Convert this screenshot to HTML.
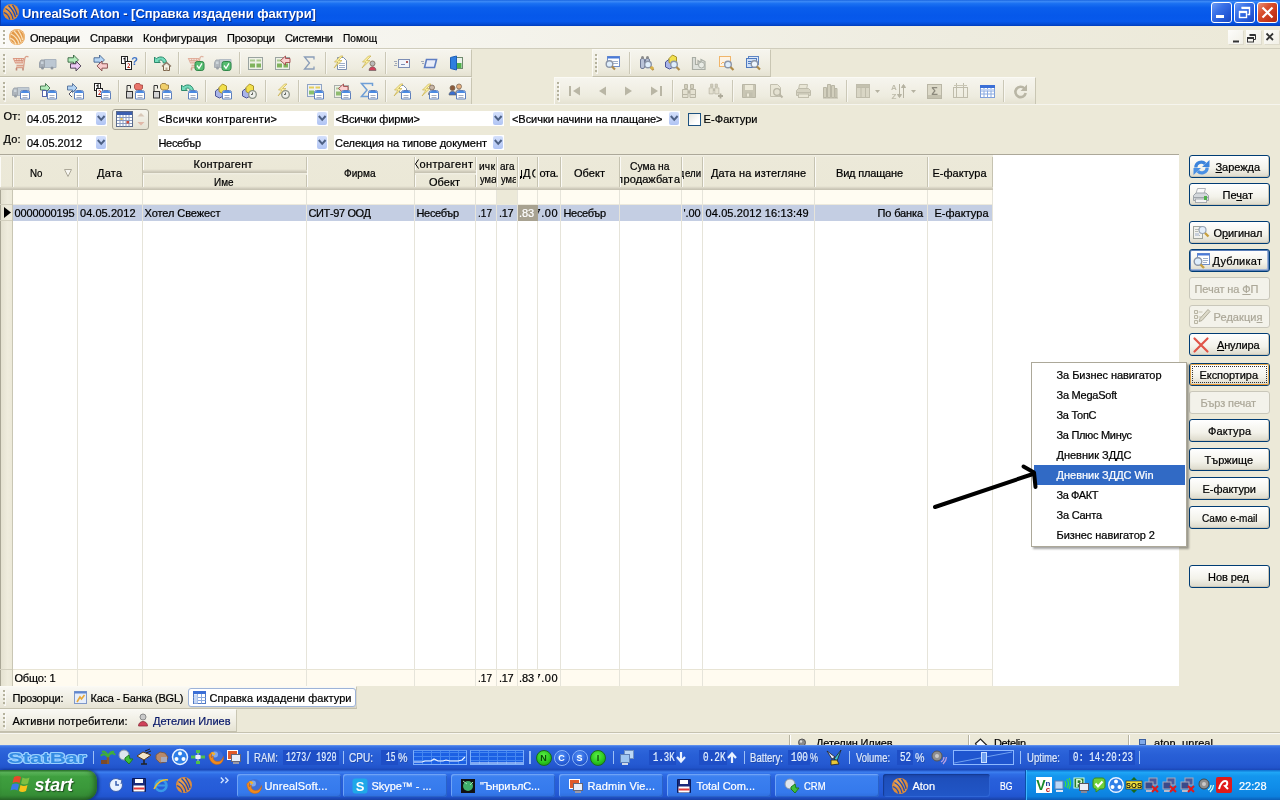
<!DOCTYPE html>
<html><head><meta charset="utf-8"><title>UnrealSoft Aton</title><style>
html,body{margin:0;padding:0;}
body{width:1280px;height:800px;overflow:hidden;background:#ece9d8;font-family:"Liberation Sans",sans-serif;font-size:11px;color:#000;position:relative;}
div,span{position:absolute;box-sizing:border-box;white-space:nowrap;}
svg{position:absolute;overflow:visible;}
.t{line-height:13px;height:13px;-webkit-text-stroke:.22px currentColor;}
.title{left:0;top:0;width:1280px;height:26px;background:linear-gradient(#1a66e0 0%,#3a88f6 6%,#1a70f2 14%,#0a5eec 30%,#0658ea 60%,#0759ec 82%,#044cd4 93%,#003cbc 100%);box-shadow:inset 1px 0 0 #0a3cb0;}
.title .cap{left:22px;top:6px;color:#fff;font-weight:bold;font-size:13px;line-height:16px;height:16px;letter-spacing:-0.05px;text-shadow:1px 1px 0 #0a2f8c;}
.menubar{left:0;top:26px;width:1280px;height:23px;background:linear-gradient(90deg,#faf9f6 0%,#f5f4ed 35%,#eeecdf 75%,#ece9d8 100%);border-bottom:1px solid #d0cdbc;}
.mi{top:6px;}
.tb{background:linear-gradient(#f6f5ee,#eeecdf 70%,#e5e2d2);border-top:1px solid #fbfaf5;border-bottom:1px solid #c3c0ad;border-right:1px solid #c9c6b3;}
.grip{width:2px;background-image:repeating-linear-gradient(#b5b29d 0,#b5b29d 2px,transparent 2px,transparent 4px);box-shadow:1px 1px 0 rgba(255,255,255,.7);}
.sep{width:1px;background:#cbc8b7;border-right:0;box-shadow:1px 0 0 #f8f7f1;}
.combo{background:#fff;height:15px;}
.combo .t{left:3px;top:2px;font-size:11px;}
.dd{width:10px;height:13px;border-radius:2px;background:linear-gradient(#d4e0fb,#b0c4f4);}
.btn{left:1189px;width:81px;height:23px;border:1px solid #003c74;border-radius:3px;background:linear-gradient(#ffffff,#f3f2ea 60%,#dcd9ca);text-align:center;font-size:11px;line-height:21px;box-shadow:inset -1px -1px 0 #cbc7b8;}
.btn.dis{border-color:#c9c7ba;color:#aca899;background:#f3f2ea;box-shadow:none;}
.btn u{text-decoration:underline;}
.gh{background:linear-gradient(#f3f1e6 0,#ece9d9 2px,#ebe8d7 calc(100% - 4px),#e2dece calc(100% - 3px),#d6d2c2 calc(100% - 2px),#cbc7b8 calc(100% - 1px),#c5c1b0 100%);overflow:hidden;}
.gh::after{content:"";position:absolute;right:0;top:2px;bottom:3px;width:1px;background:#c6c3b1;}
.gh::before{content:"";position:absolute;left:0;top:2px;bottom:3px;width:1px;background:#fbfaf6;}
.gh span{left:0;width:100%;text-align:center;line-height:13px;}
.cell{top:205px;height:16px;font-size:11px;line-height:16px;overflow:hidden;}
.foot{top:670px;height:16px;font-size:11px;line-height:16px;overflow:hidden;}
.vline{top:190px;width:1px;height:496px;background:#e6e4da;}
.mitem{left:1056px;font-size:11px;line-height:13px;}
.sb{color:#dfe9fb;font-size:12px;line-height:14px;top:751px;transform-origin:0 0;}
.sbd{color:#e9f2ff;font-family:"Liberation Mono",monospace;font-size:11px;line-height:14px;top:751px;}
.tsk{top:774px;height:23px;border-radius:3px;background:linear-gradient(#5c95f3 0,#3b80f0 12%,#3579ec 80%,#2f6edc 100%);box-shadow:inset 1px 1px 0 #6ea3f6,inset -1px -1px 0 #2a62c8;color:#fff;font-size:11px;}
.tsk .t{top:5px;font-size:11.5px;}
</style></head><body><div id="w" style="left:0;top:0;width:1280px;height:800px;will-change:transform;">

<div class="title"><span class="cap">UnrealSoft Aton - [Справка издадени фактури]</span></div>
<svg style="left:3px;top:4px" width="16" height="16" viewBox="0 0 16 16"><circle cx="8" cy="8" r="8" fill="#dc8c3c"/><circle cx="6" cy="5" r="4" fill="#eca85c" opacity=".6"/><path d="M2.500 4.500c4 2 6.500 5 7.500 10.500M5.500 1.500c3 3 6 7 7 11.500M9.500 .8c2 3 4 6 4.500 10M.8 8.500c3 1 5 3 6 7" fill="none" stroke="#1c4cb8" stroke-width="1.300"/></svg>
<div style="left:1211px;top:2px;width:21px;height:21px;border:1px solid #fff;border-radius:3px;background:linear-gradient(135deg,#6e9cf5 0%,#3a72e8 35%,#2459d8 70%,#1a48c0 100%);"></div>
<div style="left:1234px;top:2px;width:21px;height:21px;border:1px solid #fff;border-radius:3px;background:linear-gradient(135deg,#6e9cf5 0%,#3a72e8 35%,#2459d8 70%,#1a48c0 100%);"></div>
<div style="left:1257px;top:2px;width:21px;height:21px;border:1px solid #fff;border-radius:3px;background:linear-gradient(135deg,#e8927a 0%,#d9512f 35%,#c7371a 70%,#b02c12 100%);"></div>
<div style="left:1216px;top:15px;width:8px;height:3px;background:#fff;"></div>
<svg style="left:1238px;top:6px" width="14" height="14"><path d="M3.5 1.5h8v7h-2" fill="none" stroke="#fff" stroke-width="1.4"/><path d="M3.5 2.2h8" stroke="#fff" stroke-width="1.8"/><rect x="1.5" y="5.5" width="7" height="6" fill="none" stroke="#fff" stroke-width="1.4"/><path d="M1.5 6.2h7" stroke="#fff" stroke-width="1.8"/></svg>
<svg style="left:1261px;top:6px" width="14" height="14"><path d="M1.500 1.500l10 10M11.500 1.500l-10 10" stroke="#fff" stroke-width="2.2"/></svg>
<div class="menubar"></div>
<div class="grip" style="left:3px;top:30px;height:16px"></div>
<svg style="left:9px;top:29px" width="16" height="16" viewBox="0 0 16 16"><circle cx="8" cy="8" r="8" fill="#e39a4a"/><circle cx="8" cy="8" r="7.200" fill="none" stroke="#f6d0a0" stroke-width=".8"/><path d="M2 5c4 2 7 5 8 10M5 2c3 3 6 7 7 11M9 1c2 3 4 6 4.500 10M1 9c3 1 5 3 6 6.500" fill="none" stroke="#fbe3bd" stroke-width="1.300"/></svg>
<span class="t " style="left:30px;top:32px;font-size:11px;letter-spacing:-0.208px;">Операции</span>
<span class="t " style="left:90px;top:32px;font-size:11px;letter-spacing:0.011px;">Справки</span>
<span class="t " style="left:143px;top:32px;font-size:11px;letter-spacing:0.016px;">Конфигурация</span>
<span class="t " style="left:227px;top:32px;font-size:11px;letter-spacing:-0.231px;">Прозорци</span>
<span class="t " style="left:285px;top:32px;font-size:11px;letter-spacing:-0.343px;">Системни</span>
<span class="t " style="left:343px;top:32px;font-size:11px;transform:scaleX(0.9251);transform-origin:0 0;">Помощ</span>
<div style="left:1228px;top:30px;width:15px;height:14px;background:linear-gradient(135deg,#fdfdfb,#f1efe6);box-shadow:1px 1px 0 #dedbcc;"></div>
<div style="left:1246px;top:30px;width:15px;height:14px;background:linear-gradient(135deg,#fdfdfb,#f1efe6);box-shadow:1px 1px 0 #dedbcc;"></div>
<div style="left:1264px;top:30px;width:15px;height:14px;background:linear-gradient(135deg,#fdfdfb,#f1efe6);box-shadow:1px 1px 0 #dedbcc;"></div>
<svg style="left:1228px;top:30px" width="48" height="16"><path d="M5 11.5h6" stroke="#fff" stroke-width="2" transform="translate(1,1)"/><path d="M5 11.5h6" stroke="#333" stroke-width="2"/><g fill="none" stroke="#333" stroke-width="1"><path d="M21.5 4.5h6v5h-1.5M21.5 5.5h6" /><rect x="19.500" y="7.500" width="6" height="4.500"/><path d="M19.500 8.500h6"/></g><path d="M38.500 3.500l6.500 6.500M45 3.500l-6.500 6.500" stroke="#333" stroke-width="1.800"/></svg>
<div class="tb" style="left:0;top:49px;width:472px;height:28px;"></div>
<div class="tb" style="left:0;top:77px;width:472px;height:28px;"></div>
<div class="grip" style="left:3px;top:54px;height:19px"></div>
<div class="grip" style="left:3px;top:82px;height:19px"></div>
<svg style="left:12px;top:55px" width="16" height="16" viewBox="0 0 16 16"><path d="M16.500 2c-2.500-1.500-3.500 0-3.800 2l-1.200 8.500h-7.500M4.500 10.500h7" fill="none" stroke="#d9a08a" stroke-width="1.300"/><path d="M1.500 3.500h10l-1 4.500h-7z" fill="#f8e0d6" stroke="#dc9a84" stroke-width="1.100"/><path d="M3 5.500h8M4.500 3.500l.7 4.500M7 3.500v4.500M9.500 3.500l-.5 4.500" stroke="#d08a72" stroke-width=".8"/><path d="M4.500 13v2.500M11 13v2.500" stroke="#c08a78" stroke-width="1.600"/></svg>
<svg style="left:39px;top:55px" width="16" height="16" viewBox="0 0 16 16"><path d="M5.500 4.500h11.500v8h-11.500z" fill="#bcc7d2" stroke="#a9b3be"/><path d="M.5 12.500v-5l1.500-2.500h3.500v7.500z" fill="#a7afb8" stroke="#9aa2ab"/><path d="M2 6.500h2.500v2.500h-2.500z" fill="#c9d2da"/><circle cx="3.500" cy="13" r="1.500" fill="#8d959e"/><circle cx="13" cy="13" r="1.500" fill="#8d959e"/></svg>
<svg style="left:66px;top:55px" width="16" height="16" viewBox="0 0 16 16"><path transform="translate(2,0) scale(1.1)" d="M0 2.500h5v-2.500l4.500 4.500-4.500 4.500v-2.500h-5z" fill="#b4ecbc" stroke="#2a5a34" stroke-width=".75"/><path transform="translate(4.5,6) scale(1.1)" d="M0 2.500h5v-2.500l4.500 4.500-4.500 4.500v-2.500h-5z" fill="#eccaf4" stroke="#33283c" stroke-width=".75"/></svg>
<svg style="left:93px;top:55px" width="16" height="16" viewBox="0 0 16 16"><path transform="translate(1,0) scale(1.1)" d="M0 2.500h5v-2.500l4.500 4.500-4.500 4.500v-2.500h-5z" fill="#b4d4f4" stroke="#3a5a88" stroke-width=".75"/><path transform="translate(4,6) scale(1.1)" d="M9.500 2.500h-5v-2.500l-4.500 4.500 4.500 4.500v-2.500h5z" fill="#f8cccc" stroke="#7a3a3a" stroke-width=".75"/></svg>
<svg style="left:120px;top:55px" width="16" height="16" viewBox="0 0 16 16"><rect x="1.500" y="1.500" width="6" height="7" fill="#fff" stroke="#222"/><path d="M3.500 4l1.500-1v4.500" fill="none" stroke="#111" stroke-width="1.100"/><rect x="5.500" y="6.500" width="6" height="8" fill="#fff" stroke="#222"/><path d="M7.500 9q1.500-1.200 2 0t-2 3.500h2.500" fill="none" stroke="#c0392b" stroke-width="1"/><text x="14.500" y="9.500" font-size="11" font-family="Liberation Sans" font-weight="bold" text-anchor="middle" fill="#3f74c8">?</text></svg>
<div class="sep" style="left:145px;top:52px;height:22px"></div>
<svg style="left:153px;top:55px" width="16" height="16" viewBox="0 0 16 16"><path d="M1.500 7.500v-5.500l1.800 1.800c3.500-3.500 10-2 10.200 4.200h-3.200c-.2-3-3-3.800-4.800-2l1.800 1.500z" fill="#74dcbc" stroke="#2c8a6c" stroke-width="1"/><path d="M10.500 11v4.500h6v-4.500" fill="#f8f2e6" stroke="#7a6248"/><path d="M9 11.500l4.500-4 4.500 4" fill="none" stroke="#8e7a68" stroke-width="1.500"/><rect x="12.500" y="12.500" width="2" height="3" fill="#b8a890"/></svg>
<div class="sep" style="left:178px;top:52px;height:22px"></div>
<svg style="left:187px;top:55px" width="16" height="16" viewBox="0 0 16 16"><g opacity=".75"><path d="M16.500 2c-2.500-1.500-3.500 0-3.800 2l-1.200 8.500h-7.500M4.500 10.500h7" fill="none" stroke="#d9a08a" stroke-width="1.300"/><path d="M1.500 3.500h10l-1 4.500h-7z" fill="#f8e0d6" stroke="#dc9a84" stroke-width="1.100"/><path d="M3 5.500h8M4.500 3.500l.7 4.500M7 3.500v4.500M9.500 3.500l-.5 4.500" stroke="#d08a72" stroke-width=".8"/><path d="M4.500 13v2.500M11 13v2.500" stroke="#c08a78" stroke-width="1.600"/></g><rect x="8" y="6.500" width="9" height="9" rx="2.200" fill="#55bd70" stroke="#2f8648"/><path d="M10 10.500l2 2.800 3-5" fill="none" stroke="#fff" stroke-width="1.300"/></svg>
<svg style="left:214px;top:55px" width="16" height="16" viewBox="0 0 16 16"><g opacity=".85"><path d="M5.500 4.500h11.500v8h-11.500z" fill="#bcc7d2" stroke="#a9b3be"/><path d="M.5 12.500v-5l1.500-2.500h3.500v7.500z" fill="#a7afb8" stroke="#9aa2ab"/><path d="M2 6.500h2.500v2.500h-2.500z" fill="#c9d2da"/><circle cx="3.500" cy="13" r="1.500" fill="#8d959e"/><circle cx="13" cy="13" r="1.500" fill="#8d959e"/></g><rect x="8" y="6.500" width="9" height="9" rx="2.200" fill="#55bd70" stroke="#2f8648"/><path d="M10 10.500l2 2.800 3-5" fill="none" stroke="#fff" stroke-width="1.300"/></svg>
<div class="sep" style="left:239px;top:52px;height:22px"></div>
<svg style="left:247px;top:55px" width="16" height="16" viewBox="0 0 16 16"><rect x="1.500" y="2.500" width="14" height="12" fill="#eef1e6" stroke="#9aa3a0"/><path d="M3 4.500h5v2h-5zM9.500 4.500h4.500v2h-4.500z" fill="#a9c98f"/><path d="M3 8.500h5v4h-5zM9.500 8.500h4.500v4h-4.500z" fill="#7fb35c"/></svg>
<svg style="left:274px;top:55px" width="16" height="16" viewBox="0 0 16 16"><rect x="1.500" y="2.500" width="14" height="12" fill="#eef1e6" stroke="#9aa3a0"/><path d="M3 4.500h5v2h-5zM9.500 4.500h4.500v2h-4.500z" fill="#a9c98f"/><path d="M3 8.500h5v4h-5zM9.500 8.500h4.500v4h-4.500z" fill="#7fb35c"/><path d="M16 3.500h-4.500v-2.500l-5 4.500 5 4.500v-2.500h4.500z" fill="#fbd0d0" stroke="#a04848" stroke-width=".9"/></svg>
<svg style="left:301px;top:55px" width="16" height="16" viewBox="0 0 16 16"><path d="M13 4.500v-2.500h-9.500l5 6-5 6h9.500v-2.500" fill="none" stroke="#8a9db8" stroke-width="1.300"/></svg>
<div class="sep" style="left:325px;top:52px;height:22px"></div>
<svg style="left:333px;top:55px" width="16" height="16" viewBox="0 0 16 16"><path d="M4.500 2.500h6l3 3v9h-9z" fill="#fff" stroke="#7b8fb0"/><path d="M6 8.500h6M6 10.500h6M6 12.500h6" stroke="#9fb0c9"/><g transform="translate(-2,0)"><path d="M9.500 1l-6 6h3.500l-4 6 8-7.500h-3.500l4.500-4.500z" fill="#fbf0a0" stroke="#c9b050" stroke-width=".7"/></g></svg>
<svg style="left:361px;top:55px" width="16" height="16" viewBox="0 0 16 16"><g transform="translate(-2,0)"><path d="M9.500 1l-6 6h3.500l-4 6 8-7.500h-3.500l4.500-4.500z" fill="#fbf0a0" stroke="#c9b050" stroke-width=".7"/></g><circle cx="11.5" cy="8.5" r="2.500" fill="#b9b9b9" stroke="#7c6a58" stroke-width=".8"/><path d="M8.0 15.5c0-5 7-5 7 0z" fill="#d0425a" stroke="#5a5a5a" stroke-width=".6"/></svg>
<div class="sep" style="left:385px;top:52px;height:22px"></div>
<svg style="left:394px;top:55px" width="16" height="16" viewBox="0 0 16 16"><rect x="4.500" y="4.500" width="11" height="8" fill="#f2f4fa" stroke="#7d8eb5"/><path d="M7 9.500h4" stroke="#7d8eb5"/><rect x="12" y="6" width="2" height="2" fill="#b05a5a"/><path d="M0 6.500h3M1 8.500h2M0 10.500h3" stroke="#a0a8b8"/></svg>
<svg style="left:421px;top:55px" width="16" height="16" viewBox="0 0 16 16"><path d="M5.500 4.500h10l-2 8h-10z" fill="#e9edf8" stroke="#5f7ec2" stroke-width="1.600"/><path d="M0 6.500h3M1 8.500h2" stroke="#a0a8b8"/></svg>
<svg style="left:448px;top:55px" width="16" height="16" viewBox="0 0 16 16"><rect x="7.500" y="2.500" width="7" height="11" fill="#eaf2ea" stroke="#6f8a6f"/><rect x="8.500" y="8" width="5" height="5" fill="#4fb04a"/><path d="M2.500 2.500l6-1.500v14l-6-1.500z" fill="#2f7fe0" stroke="#1f5fb5"/></svg>
<svg style="left:12px;top:83px" width="16" height="16" viewBox="0 0 16 16"><g opacity=".9"><path d="M5.500 4.500h11.500v8h-11.500z" fill="#bcc7d2" stroke="#a9b3be"/><path d="M.5 12.500v-5l1.500-2.500h3.500v7.500z" fill="#a7afb8" stroke="#9aa2ab"/><path d="M2 6.500h2.500v2.500h-2.500z" fill="#c9d2da"/><circle cx="3.500" cy="13" r="1.500" fill="#8d959e"/><circle cx="13" cy="13" r="1.500" fill="#8d959e"/></g><path d="M8.500 16v-6.500q0-2 2-2h5q2 0 2 2v6.500z" fill="#fff" stroke="#5f80bc"/><path d="M9 10v-.5q0-1.500 1.500-1.500h5q1.500 0 1.500 1.500v.5z" fill="#4a8ae2"/><path d="M10.500 12.500h5M10.500 14.500h5" stroke="#a4aec2" stroke-width="1"/></svg>
<svg style="left:39px;top:83px" width="16" height="16" viewBox="0 0 16 16"><path transform="translate(1.5,0.5) scale(1.0)" d="M0 2.500h5v-2.500l4.500 4.500-4.500 4.500v-2.500h-5z" fill="#b4ecbc" stroke="#2a5a34" stroke-width=".75"/><rect x="3.500" y="7.500" width="4" height="6" fill="#fff" stroke="#5566aa"/><path d="M8.500 16v-6.500q0-2 2-2h5q2 0 2 2v6.500z" fill="#fff" stroke="#5f80bc"/><path d="M9 10v-.5q0-1.500 1.500-1.500h5q1.500 0 1.500 1.500v.5z" fill="#4a8ae2"/><path d="M10.500 12.500h5M10.500 14.500h5" stroke="#a4aec2" stroke-width="1"/></svg>
<svg style="left:66px;top:83px" width="16" height="16" viewBox="0 0 16 16"><path transform="translate(1.5,0.5) scale(1.0)" d="M0 2.500h5v-2.500l4.500 4.500-4.500 4.500v-2.500h-5z" fill="#b4d4f4" stroke="#3a5a88" stroke-width=".75"/><path d="M6 8l-3 3 3 3" fill="#fff" stroke="#556"/><path d="M8.500 16v-6.500q0-2 2-2h5q2 0 2 2v6.500z" fill="#fff" stroke="#5f80bc"/><path d="M9 10v-.5q0-1.500 1.500-1.500h5q1.500 0 1.500 1.500v.5z" fill="#4a8ae2"/><path d="M10.500 12.500h5M10.500 14.500h5" stroke="#a4aec2" stroke-width="1"/></svg>
<svg style="left:93px;top:83px" width="16" height="16" viewBox="0 0 16 16"><rect x="1.500" y=".5" width="6" height="7" fill="#fff" stroke="#222"/><path d="M3.500 3l1.500-1v4" fill="none" stroke="#111" stroke-width="1.100"/><rect x="3.500" y="5.500" width="6" height="8" fill="#fff" stroke="#222"/><path d="M5.500 8q1.500-1.200 2 0t-2 3.500h2.500" fill="none" stroke="#c0392b" stroke-width="1"/><path d="M8.500 16v-6.500q0-2 2-2h5q2 0 2 2v6.500z" fill="#fff" stroke="#5f80bc"/><path d="M9 10v-.5q0-1.500 1.500-1.500h5q1.500 0 1.500 1.500v.5z" fill="#4a8ae2"/><path d="M10.500 12.500h5M10.500 14.500h5" stroke="#a4aec2" stroke-width="1"/></svg>
<div class="sep" style="left:118px;top:80px;height:22px"></div>
<svg style="left:126px;top:83px" width="16" height="16" viewBox="0 0 16 16"><g transform="translate(-1,0)"><rect x="1.500" y="8.500" width="6" height="6.500" fill="#d4d4d4" stroke="#333"/><path d="M2 8v-5.500h3.500v3" fill="none" stroke="#333"/></g><g transform="translate(1,-1)"><path d="M9 1.500h3.500l1 1.500h2v3.500l-2 1.500h-4.500l-1.500-2v-3z" fill="#e9746a" stroke="#9c3a34" stroke-width=".75"/></g><g transform="translate(1,0)"><path d="M8.500 16v-6.500q0-2 2-2h5q2 0 2 2v6.500z" fill="#fff" stroke="#5f80bc"/><path d="M9 10v-.5q0-1.500 1.500-1.500h5q1.500 0 1.500 1.500v.5z" fill="#4a8ae2"/><path d="M10.500 12.500h5M10.500 14.500h5" stroke="#a4aec2" stroke-width="1"/></g></svg>
<svg style="left:153px;top:83px" width="16" height="16" viewBox="0 0 16 16"><g transform="translate(-1,0)"><rect x="1.500" y="8.500" width="6" height="6.500" fill="#d4d4d4" stroke="#333"/><path d="M2 8v-5.500h3.500v3" fill="none" stroke="#333"/></g><g transform="translate(0,-1)"><path d="M9 1.500h3.500l1 1.500h2v3.500l-2 1.500h-4.500l-1.500-2v-3z" fill="#f0cf6a" stroke="#8a6a2a" stroke-width=".75"/></g><g transform="translate(1,0)"><path d="M8.500 16v-6.500q0-2 2-2h5q2 0 2 2v6.500z" fill="#fff" stroke="#5f80bc"/><path d="M9 10v-.5q0-1.500 1.500-1.500h5q1.500 0 1.500 1.500v.5z" fill="#4a8ae2"/><path d="M10.500 12.500h5M10.500 14.500h5" stroke="#a4aec2" stroke-width="1"/></g></svg>
<svg style="left:180px;top:83px" width="16" height="16" viewBox="0 0 16 16"><path d="M1.500 7.500v-5.500l1.800 1.800c3.500-3.500 10-2 10.200 4.200h-3.200c-.2-3-3-3.800-4.800-2l1.800 1.500z" fill="#74dcbc" stroke="#2c8a6c" stroke-width="1"/><path d="M8.500 16v-6.500q0-2 2-2h5q2 0 2 2v6.500z" fill="#fff" stroke="#5f80bc"/><path d="M9 10v-.5q0-1.500 1.500-1.500h5q1.500 0 1.500 1.500v.5z" fill="#4a8ae2"/><path d="M10.500 12.500h5M10.500 14.500h5" stroke="#a4aec2" stroke-width="1"/></svg>
<div class="sep" style="left:205px;top:80px;height:22px"></div>
<svg style="left:214px;top:83px" width="16" height="16" viewBox="0 0 16 16"><path d="M1.500 8l4-3 4 2v6l-4 2-4-2z" fill="#a9b4e8" stroke="#4b5596" stroke-width="1"/><path d="M5 4.500l3.500-3.500 4 2v5.500l-4 2-3.500-2z" fill="#f2e04c" stroke="#a8922a" stroke-width="1"/><path d="M8.500 16v-6.500q0-2 2-2h5q2 0 2 2v6.500z" fill="#fff" stroke="#5f80bc"/><path d="M9 10v-.5q0-1.500 1.500-1.500h5q1.500 0 1.500 1.500v.5z" fill="#4a8ae2"/><path d="M10.500 12.500h5M10.500 14.500h5" stroke="#a4aec2" stroke-width="1"/></svg>
<svg style="left:241px;top:83px" width="16" height="16" viewBox="0 0 16 16"><path d="M1.500 8l4-3 4 2v6l-4 2-4-2z" fill="#a9b4e8" stroke="#4b5596" stroke-width="1"/><path d="M5 4.500l3.500-3.500 4 2v5.500l-4 2-3.500-2z" fill="#f2e04c" stroke="#a8922a" stroke-width="1"/><circle cx="11.500" cy="11.500" r="3.800" fill="#eef0ea" stroke="#8b9186" stroke-width="1.300"/><path d="M11.500 9.500v2h-1.500" fill="none" stroke="#5a5f58" stroke-width="1"/></svg>
<div class="sep" style="left:265px;top:80px;height:22px"></div>
<svg style="left:274px;top:83px" width="16" height="16" viewBox="0 0 16 16"><g transform="translate(1,0)"><path d="M9.500 1l-6 6h3.500l-4 6 8-7.500h-3.500l4.500-4.500z" fill="#fbf0a0" stroke="#c9b050" stroke-width=".7"/></g><circle cx="11.500" cy="11.500" r="3.800" fill="#eef0ea" stroke="#8b9186" stroke-width="1.300"/><path d="M11.500 9.500v2h-1.500" fill="none" stroke="#5a5f58" stroke-width="1"/></svg>
<div class="sep" style="left:298px;top:80px;height:22px"></div>
<svg style="left:306px;top:83px" width="16" height="16" viewBox="0 0 16 16"><rect x="1.500" y="1.500" width="14" height="12" fill="#eef1f6" stroke="#8fa4c4"/><path d="M3 3.500h5v2h-5zM9.500 3.500h4.500v2h-4.500z" fill="#e5cf5b"/><path d="M3 7.500h5v4h-5z" fill="#8cc06a"/><path d="M8.500 16v-6.500q0-2 2-2h5q2 0 2 2v6.500z" fill="#fff" stroke="#5f80bc"/><path d="M9 10v-.5q0-1.500 1.500-1.500h5q1.500 0 1.500 1.500v.5z" fill="#4a8ae2"/><path d="M10.500 12.500h5M10.500 14.500h5" stroke="#a4aec2" stroke-width="1"/></svg>
<svg style="left:333px;top:83px" width="16" height="16" viewBox="0 0 16 16"><g opacity=".85"><rect x="1.500" y="2.500" width="14" height="12" fill="#eef1e6" stroke="#9aa3a0"/><path d="M3 4.500h5v2h-5zM9.500 4.500h4.500v2h-4.500z" fill="#a9c98f"/><path d="M3 8.500h5v4h-5zM9.500 8.500h4.500v4h-4.500z" fill="#7fb35c"/></g><g transform="translate(-1,0)"><path d="M16 3.500h-4.500v-2.500l-5 4.500 5 4.500v-2.500h4.500z" fill="#fbd0d0" stroke="#a04848" stroke-width=".9"/></g><path d="M8.500 16v-6.500q0-2 2-2h5q2 0 2 2v6.500z" fill="#fff" stroke="#5f80bc"/><path d="M9 10v-.5q0-1.500 1.500-1.500h5q1.500 0 1.500 1.500v.5z" fill="#4a8ae2"/><path d="M10.500 12.500h5M10.500 14.500h5" stroke="#a4aec2" stroke-width="1"/></svg>
<svg style="left:360px;top:83px" width="16" height="16" viewBox="0 0 16 16"><g transform="translate(-1,-1)"><path d="M13.500 4v-2.500h-11l5.500 6.500-5.500 6.500h11v-2.500" fill="none" stroke="#6f9fd6" stroke-width="1.500"/></g><path d="M8.500 16v-6.500q0-2 2-2h5q2 0 2 2v6.500z" fill="#fff" stroke="#5f80bc"/><path d="M9 10v-.5q0-1.500 1.500-1.500h5q1.500 0 1.500 1.500v.5z" fill="#4a8ae2"/><path d="M10.500 12.500h5M10.500 14.500h5" stroke="#a4aec2" stroke-width="1"/></svg>
<div class="sep" style="left:385px;top:80px;height:22px"></div>
<svg style="left:393px;top:83px" width="16" height="16" viewBox="0 0 16 16"><path d="M6.500 2.500h4l3 3v4h-7z" fill="#fff" stroke="#7b8fb0"/><g transform="translate(-2,0)"><path d="M9.500 1l-6 6h3.500l-4 6 8-7.500h-3.500l4.500-4.500z" fill="#fbf0a0" stroke="#c9b050" stroke-width=".7"/></g><path d="M8.500 16v-6.500q0-2 2-2h5q2 0 2 2v6.500z" fill="#fff" stroke="#5f80bc"/><path d="M9 10v-.5q0-1.500 1.500-1.500h5q1.500 0 1.500 1.500v.5z" fill="#4a8ae2"/><path d="M10.500 12.500h5M10.500 14.500h5" stroke="#a4aec2" stroke-width="1"/></svg>
<svg style="left:421px;top:83px" width="16" height="16" viewBox="0 0 16 16"><g transform="translate(-2,0)"><path d="M9.500 1l-6 6h3.500l-4 6 8-7.500h-3.500l4.500-4.500z" fill="#fbf0a0" stroke="#c9b050" stroke-width=".7"/></g><circle cx="11" cy="4.5" r="2.500" fill="#c9b8a8" stroke="#7c6a58" stroke-width=".8"/><path d="M7.5 11.5c0-5 7-5 7 0z" fill="#556" stroke="#5a5a5a" stroke-width=".6"/><path d="M8.500 16v-6.500q0-2 2-2h5q2 0 2 2v6.500z" fill="#fff" stroke="#5f80bc"/><path d="M9 10v-.5q0-1.500 1.500-1.500h5q1.500 0 1.500 1.500v.5z" fill="#4a8ae2"/><path d="M10.500 12.500h5M10.500 14.500h5" stroke="#a4aec2" stroke-width="1"/></svg>
<svg style="left:448px;top:83px" width="16" height="16" viewBox="0 0 16 16"><circle cx="4.5" cy="5" r="2.500" fill="#8a5a3a" stroke="#7c6a58" stroke-width=".8"/><path d="M1.0 12c0-5 7-5 7 0z" fill="#3a6fd0" stroke="#5a5a5a" stroke-width=".6"/><circle cx="11" cy="3.5" r="2.500" fill="#e6b080" stroke="#7c6a58" stroke-width=".8"/><path d="M7.5 10.5c0-5 7-5 7 0z" fill="#e0a060" stroke="#5a5a5a" stroke-width=".6"/><path d="M8.500 16v-6.500q0-2 2-2h5q2 0 2 2v6.500z" fill="#fff" stroke="#5f80bc"/><path d="M9 10v-.5q0-1.500 1.500-1.500h5q1.500 0 1.500 1.500v.5z" fill="#4a8ae2"/><path d="M10.500 12.500h5M10.500 14.500h5" stroke="#a4aec2" stroke-width="1"/></svg>
<div class="tb" style="left:592px;top:49px;width:179px;height:28px;border-left:1px solid #fbfaf5"></div>
<div class="grip" style="left:595px;top:54px;height:19px"></div>
<svg style="left:604px;top:55px" width="16" height="16" viewBox="0 0 16 16"><rect x="3.500" y="1.500" width="12" height="10" fill="#fff" stroke="#6f8ec9"/><path d="M3.500 2.500h12" stroke="#4a7ad8" stroke-width="2"/><path d="M9 6.500h5M9 8.500h5" stroke="#9fb0c9"/><circle cx="5.500" cy="9" r="3.300" fill="#dfeefc" stroke="#8c96a8" stroke-width="1.400"/><path d="M8 11.500l3 3" stroke="#b08c4a" stroke-width="2.200"/></svg>
<div class="sep" style="left:629px;top:52px;height:22px"></div>
<svg style="left:638px;top:55px" width="16" height="16" viewBox="0 0 16 16"><rect x="2.500" y="3.500" width="4" height="10" rx="1.500" fill="#b9c3d8" stroke="#6f7a96"/><rect x="7.500" y="3.500" width="4" height="8" rx="1.500" fill="#b9c3d8" stroke="#6f7a96"/><circle cx="4.500" cy="2.500" r="1.500" fill="#8a8a8a"/><circle cx="9.500" cy="2.500" r="1.500" fill="#8a8a8a"/><circle cx="10" cy="9.500" r="3.300" fill="#dfeefc" stroke="#8c96a8" stroke-width="1.400"/><path d="M12.500 12l3 3" stroke="#b08c4a" stroke-width="2.200"/><rect x="12.500" y="11.500" width="3" height="3" fill="#d9b24a" transform="rotate(45 14 13)"/></svg>
<svg style="left:664px;top:55px" width="16" height="16" viewBox="0 0 16 16"><g transform="translate(0,-1)"><path d="M1.500 8l4-3 4 2v6l-4 2-4-2z" fill="#a9b4e8" stroke="#4b5596" stroke-width="1"/><path d="M5 4.500l3.500-3.500 4 2v5.500l-4 2-3.500-2z" fill="#f2e04c" stroke="#a8922a" stroke-width="1"/></g><circle cx="10" cy="9.500" r="3.300" fill="#dfeefc" stroke="#8c96a8" stroke-width="1.400"/><path d="M12.500 12l3 3" stroke="#b08c4a" stroke-width="2.200"/></svg>
<svg style="left:691px;top:55px" width="16" height="16" viewBox="0 0 16 16"><path d="M1.500 14.500v-12h3v7h2.500v-4l3 2v-3l4 2v8z" fill="#dfe2dc" stroke="#a9ada4" stroke-width="1.200"/><circle cx="10.500" cy="10" r="3" fill="#e9ece6" stroke="#a9ada4"/></svg>
<svg style="left:718px;top:55px" width="16" height="16" viewBox="0 0 16 16"><rect x="1.500" y="1.500" width="11" height="10" fill="#fdf3e4" stroke="#f0b56a"/><path d="M3 9l2-2 2 2" fill="none" stroke="#f0b56a"/><circle cx="10" cy="9.500" r="3.300" fill="#dfeefc" stroke="#8c96a8" stroke-width="1.400"/><path d="M12.500 12l3 3" stroke="#b08c4a" stroke-width="2.200"/></svg>
<svg style="left:745px;top:55px" width="16" height="16" viewBox="0 0 16 16"><rect x="3.500" y="1.500" width="10" height="8" fill="#dfeaf8" stroke="#5f86c4"/><rect x="1.500" y="3.500" width="10" height="9" fill="#cfe0f6" stroke="#4f7abf"/><path d="M3 6.500h4M3 8.500h3" stroke="#4f7abf"/><circle cx="9.500" cy="9" r="3.300" fill="#eef6fd" stroke="#8c96a8" stroke-width="1.400"/><path d="M12 11.500l3 3" stroke="#b08c4a" stroke-width="2.200"/></svg>
<div class="tb" style="left:554px;top:77px;width:482px;height:28px;border-left:1px solid #fbfaf5"></div>
<div class="grip" style="left:557px;top:82px;height:19px"></div>
<svg style="left:567px;top:83px" width="16" height="16" viewBox="0 0 16 16"><path d="M3 3v10" stroke="#b9b6a5" stroke-width="2"/><path d="M13 3.500v9l-7-4.500z" fill="#b9b6a5"/></svg>
<svg style="left:594px;top:83px" width="16" height="16" viewBox="0 0 16 16"><path d="M12 3.500v9l-7-4.500z" fill="#b9b6a5"/></svg>
<svg style="left:621px;top:83px" width="16" height="16" viewBox="0 0 16 16"><path d="M4 3.500v9l7-4.500z" fill="#b9b6a5"/></svg>
<svg style="left:648px;top:83px" width="16" height="16" viewBox="0 0 16 16"><path d="M13 3v10" stroke="#b9b6a5" stroke-width="2"/><path d="M3 3.500v9l7-4.500z" fill="#b9b6a5"/></svg>
<div class="sep" style="left:672px;top:80px;height:22px"></div>
<svg style="left:681px;top:83px" width="16" height="16" viewBox="0 0 16 16"><path d="M3.500 1.500h3v4h-3zM9.500 1.500h3v4h-3z" fill="#d2cfbd" stroke="#b9b6a5"/><path d="M1.500 6.500h5.500v8h-5.500zM9 6.500h5.500v8h-5.500z" fill="#e4e1d1" stroke="#b9b6a5"/><path d="M7 7.500h2v3h-2z" fill="#b9b6a5"/><path d="M2 11.500h4.500M9.500 11.500h4.500" stroke="#b9b6a5"/></svg>
<svg style="left:708px;top:83px" width="16" height="16" viewBox="0 0 16 16"><g transform="scale(.75)"><path d="M3.500 1.500h3v4h-3zM9.500 1.500h3v4h-3z" fill="#d2cfbd" stroke="#b9b6a5"/><path d="M1.500 6.500h5.500v8h-5.500zM9 6.500h5.500v8h-5.500z" fill="#e4e1d1" stroke="#b9b6a5"/><path d="M7 7.500h2v3h-2z" fill="#b9b6a5"/></g><path d="M10 13h5M12.500 10.500v5" stroke="#aeab9a" stroke-width="1.800"/></svg>
<div class="sep" style="left:732px;top:80px;height:22px"></div>
<svg style="left:741px;top:83px" width="16" height="16" viewBox="0 0 16 16"><path d="M1.500 1.500h13v13h-13z" fill="#c9c6b4" stroke="#b9b6a5"/><rect x="4" y="2" width="8" height="5" fill="#ece9d8"/><rect x="4.500" y="9.500" width="7" height="5" fill="#c2bfae"/><rect x="6" y="10.500" width="2" height="3" fill="#ece9d8"/></svg>
<svg style="left:768px;top:83px" width="16" height="16" viewBox="0 0 16 16"><path d="M2.500 1.500h7l3 3v9h-10z" fill="#e9e6d6" stroke="#c2bfae"/><circle cx="9" cy="9" r="3.300" fill="#e4e1d1" stroke="#b9b6a5" stroke-width="1.300"/><path d="M11.500 11.500l3 3" stroke="#b9b6a5" stroke-width="2"/></svg>
<svg style="left:795px;top:83px" width="16" height="16" viewBox="0 0 16 16"><path d="M4.500 1.500h8l-1 5h-8z" fill="#e9e6d6" stroke="#c2bfae"/><path d="M1.500 7.500l2-2h10l2 2v5h-14z" fill="#d6d3c2" stroke="#bfbcab"/><path d="M1.500 9.500h14" stroke="#bfbcab"/><rect x="3.500" y="11" width="10" height="3.500" fill="#e9e6d6" stroke="#c2bfae"/></svg>
<svg style="left:822px;top:83px" width="16" height="16" viewBox="0 0 16 16"><path d="M1.500 4.500h3v10h-3zM5.500 1.500h3v13h-3zM9.500 2.500h3v12h-3zM13 5.500h2v9h-2z" fill="#d2cfbd" stroke="#b9b6a5"/><path d="M1 15h15" stroke="#b9b6a5"/></svg>
<div class="sep" style="left:846px;top:80px;height:22px"></div>
<svg style="left:855px;top:83px" width="16" height="16" viewBox="0 0 16 16"><rect x="1.500" y="1.500" width="13" height="13" fill="#d9d6c5" stroke="#bfbcab"/><path d="M1.500 4.500h13M6 1.500v13M10.500 1.500v13" stroke="#bfbcab"/><rect x="2" y="2" width="12" height="2" fill="#c4c1af"/></svg>
<svg style="left:890px;top:83px" width="16" height="16" viewBox="0 0 16 16"><text x="4" y="7" font-size="8" font-family="Liberation Sans" font-weight="bold" text-anchor="middle" fill="#bfbcab">A</text><text x="4" y="15.500" font-size="8" font-family="Liberation Sans" font-weight="bold" text-anchor="middle" fill="#bfbcab">Z</text><path d="M9.500 1v13M7.500 11.500l2 3 2-3z" stroke="#b5b2a1" fill="#b5b2a1"/><path d="M13.500 15v-13M11.500 4.500l2-3 2 3z" stroke="#b5b2a1" fill="#b5b2a1"/></svg>
<svg style="left:926px;top:83px" width="16" height="16" viewBox="0 0 16 16"><rect x="1.500" y="1.500" width="14" height="14" fill="#dcd9c8" stroke="#b9b6a5"/><rect x="2" y="12" width="13" height="3" fill="#c4c1af"/><text x="8.500" y="11.500" font-size="11" font-family="Liberation Sans" font-weight="bold" text-anchor="middle" fill="#8c897c">Σ</text></svg>
<svg style="left:952px;top:83px" width="16" height="16" viewBox="0 0 16 16"><path d="M4.500 0v15M11.500 0v15M1 4.500h15M1 14.500h15M1.500 4v11M15.500 4v11" stroke="#bfbcab" fill="none"/><path d="M2 2.500h13" stroke="#c9c6b4"/></svg>
<svg style="left:979px;top:83px" width="16" height="16" viewBox="0 0 16 16"><rect x="1.500" y="2.500" width="14" height="12" fill="#fff" stroke="#7f9fd9"/><rect x="1" y="2" width="15" height="3" fill="#3b6fd6"/><path d="M1.500 8h14M1.500 11h14M5 5v9.500M8.500 5v9.500M12 5v9.500" stroke="#8aaae0"/><path d="M2 6h13v1.500h-13z" fill="#c6d7f4"/></svg>
<div class="sep" style="left:1003px;top:80px;height:22px"></div>
<svg style="left:1012px;top:83px" width="16" height="16" viewBox="0 0 16 16"><path d="M12.500 5.500a5.200 5.200 0 1 0 1.200 4.500" fill="none" stroke="#b9b6a5" stroke-width="2.600"/><path d="M15 1.500v6.500h-6.500z" fill="#b9b6a5"/></svg>
<svg style="left:875px;top:90px" width="6" height="4"><path d="M0 0h5l-2.500 3z" fill="#b5b2a1"/></svg>
<svg style="left:911px;top:90px" width="6" height="4"><path d="M0 0h5l-2.500 3z" fill="#b5b2a1"/></svg>
<span class="t " style="left:3.5px;top:109.5px;font-size:11px;letter-spacing:0.175px;">От:</span>
<span class="t " style="left:3.5px;top:133px;font-size:11px;letter-spacing:0.126px;">До:</span>
<div class="combo" style="left:26px;top:111px;width:81px"></div>
<span class="t " style="left:27px;top:113px;font-size:11px;letter-spacing:-0.006px;">04.05.2012</span>
<div class="dd" style="left:96px;top:112px"></div><svg style="left:97px;top:115px" width="9" height="8"><path d="M.8 1l3.400 3.800 3.400-3.800" fill="none" stroke="#4d6185" stroke-width="2"/></svg>
<div class="combo" style="left:26px;top:134.5px;width:81px"></div>
<span class="t " style="left:27px;top:136.5px;font-size:11px;letter-spacing:-0.006px;">04.05.2012</span>
<div class="dd" style="left:96px;top:135.5px"></div><svg style="left:97px;top:138.5px" width="9" height="8"><path d="M.8 1l3.400 3.800 3.400-3.800" fill="none" stroke="#4d6185" stroke-width="2"/></svg>
<div style="left:112px;top:109px;width:37px;height:21px;border:1px solid #a5a294;border-radius:3px;background:linear-gradient(#f7f6f0,#e5e2d3);"></div>
<svg style="left:116px;top:111px" width="17" height="16"><rect x=".5" y=".5" width="16" height="15" fill="#fff" stroke="#5a6a8a"/><rect x="1" y="1" width="15" height="3" fill="#3b5fb0"/><path d="M1 6.500h15M1 9.500h15M1 12.500h15M4 4v11.500M7 4v11.500M10 4v11.500M13 4v11.500" stroke="#8a9cc0"/><rect x="10.500" y="10" width="2.500" height="2.500" fill="#d04a3a"/><rect x="4.500" y="7" width="2" height="2" fill="#e8c050"/></svg>
<svg style="left:137px;top:112px" width="8" height="15"><path d="M.5 4.500l3.500-3.500 3.500 3.500z" fill="#d9c8b8"/><path d="M.5 10l3.500 3.500 3.500-3.500z" fill="#e0b8a8"/></svg>
<div class="combo" style="left:157.5px;top:111px;width:170.5px"></div>
<span class="t " style="left:158.5px;top:113px;font-size:11px;letter-spacing:0.283px;">&lt;Всички контрагенти&gt;</span>
<div class="dd" style="left:317.0px;top:112px"></div><svg style="left:318.0px;top:115px" width="9" height="8"><path d="M.8 1l3.400 3.800 3.400-3.800" fill="none" stroke="#4d6185" stroke-width="2"/></svg>
<div class="combo" style="left:157.5px;top:134.5px;width:170.5px"></div>
<span class="t " style="left:158.5px;top:136.5px;font-size:11px;letter-spacing:-0.331px;">Несебър</span>
<div class="dd" style="left:317.0px;top:135.5px"></div><svg style="left:318.0px;top:138.5px" width="9" height="8"><path d="M.8 1l3.400 3.800 3.400-3.800" fill="none" stroke="#4d6185" stroke-width="2"/></svg>
<div class="combo" style="left:334px;top:111px;width:170px"></div>
<span class="t " style="left:335.5px;top:113px;font-size:11px;letter-spacing:-0.161px;">&lt;Всички фирми&gt;</span>
<div class="dd" style="left:493px;top:112px"></div><svg style="left:494px;top:115px" width="9" height="8"><path d="M.8 1l3.400 3.800 3.400-3.800" fill="none" stroke="#4d6185" stroke-width="2"/></svg>
<div class="combo" style="left:334px;top:134.5px;width:170px"></div>
<span class="t " style="left:335px;top:136.5px;font-size:11px;letter-spacing:-0.060px;">Селекция на типове докумен</span>
<div class="dd" style="left:493px;top:135.5px"></div><svg style="left:494px;top:138.5px" width="9" height="8"><path d="M.8 1l3.400 3.800 3.400-3.800" fill="none" stroke="#4d6185" stroke-width="2"/></svg>
<div style="left:482px;top:136.500px;width:5.500px;height:13px;overflow:hidden"><span class="t" style="left:0;top:0;font-size:11px">т</span></div>
<div class="combo" style="left:510px;top:111px;width:170px"></div>
<span class="t " style="left:512px;top:113px;font-size:11px;letter-spacing:-0.051px;">&lt;Всички начини на плащане&gt;</span>
<div class="dd" style="left:669px;top:112px"></div><svg style="left:670px;top:115px" width="9" height="8"><path d="M.8 1l3.400 3.800 3.400-3.800" fill="none" stroke="#4d6185" stroke-width="2"/></svg>
<div style="left:688px;top:113px;width:13px;height:13px;border:1px solid #1c5180;background:linear-gradient(135deg,#e6e6e0,#fff 70%);"></div>
<span class="t " style="left:703.5px;top:113px;font-size:11px;letter-spacing:0.098px;">Е-Фактури</span>
<div style="left:0;top:154px;width:1179px;height:532px;background:#fff;border-top:1px solid #aca899;"></div><div style="left:0;top:104px;width:1280px;height:1px;background:#f6f5ee"></div>
<div style="left:0;top:155px;width:13px;height:531px;background:linear-gradient(90deg,#e4e1d0,#efecdd 60%,#ece9d8);border-right:1px solid #c9c6b4;border-left:1px solid #a9a695;"></div>
<div style="left:0;top:204px;width:12px;height:1px;background:#d2cfbe"></div><div style="left:0;top:220px;width:12px;height:1px;background:#d2cfbe"></div><div style="left:0;top:669px;width:12px;height:1px;background:#d2cfbe"></div>
<div style="left:13px;top:190px;width:980px;height:15px;background:#fffcf2;border-bottom:1px solid #ece9dc"></div>
<div style="left:497px;top:190px;width:21px;height:15px;background:#ece9d8;"></div>
<div style="left:13px;top:669px;width:980px;height:17px;background:#fffbf0;border-top:1px solid #e8e4d4"></div>
<div style="left:13px;top:205px;width:980px;height:16px;background:#c4cee3;"></div>
<div style="left:518px;top:205px;width:20px;height:16px;background:#a8a291;"></div>
<div class="vline" style="left:77px"></div>
<div class="vline" style="left:142px"></div>
<div class="vline" style="left:306px"></div>
<div class="vline" style="left:414px"></div>
<div class="vline" style="left:475px"></div>
<div class="vline" style="left:496px"></div>
<div class="vline" style="left:517px"></div>
<div class="vline" style="left:537px"></div>
<div class="vline" style="left:560px"></div>
<div class="vline" style="left:619px"></div>
<div class="vline" style="left:681px"></div>
<div class="vline" style="left:702px"></div>
<div class="vline" style="left:814px"></div>
<div class="vline" style="left:927px"></div>
<div class="vline" style="left:992px"></div>
<div class="gh" style="left:0px;top:155px;width:13px;height:35px;"></div>
<div class="gh" style="left:13px;top:155px;width:65px;height:35px;"></div>
<span class="t " style="left:29.5px;top:167px;font-size:11px;transform:scaleX(0.8889);transform-origin:0 0;">No</span>
<div class="gh" style="left:78px;top:155px;width:65px;height:35px;"></div>
<span class="t " style="left:97px;top:167px;font-size:11px;letter-spacing:0.214px;">Дата</span>
<div class="gh" style="left:143px;top:155px;width:164px;height:18px;"></div>
<span class="t " style="left:193.5px;top:158px;font-size:11px;letter-spacing:0.236px;">Контрагент</span>
<div class="gh" style="left:143px;top:173px;width:164px;height:17px;"></div>
<span class="t " style="left:214px;top:176px;font-size:11px;transform:scaleX(0.9033);transform-origin:0 0;">Име</span>
<div class="gh" style="left:307px;top:155px;width:108px;height:35px;"></div>
<span class="t " style="left:343.5px;top:167px;font-size:11px;transform:scaleX(0.9182);transform-origin:0 0;">Фирма</span>
<div class="gh" style="left:415px;top:155px;width:61px;height:18px;"></div>
<span class="t " style="left:419.5px;top:158px;font-size:11px;letter-spacing:0.379px;">онтрагент</span>
<svg style="left:415px;top:159px" width="4" height="10"><path d="M3.500 .5l-3 4.500 3 4.500" fill="none" stroke="#000" stroke-width="1"/></svg>
<div class="gh" style="left:415px;top:173px;width:61px;height:17px;"></div>
<span class="t " style="left:429px;top:176px;font-size:11px;letter-spacing:0.044px;">Обект</span>
<div class="gh" style="left:476px;top:155px;width:21px;height:35px;"></div>
<span class="t " style="left:479px;top:160px;font-size:11px;transform:scaleX(0.9263);transform-origin:0 0;">ич</span>
<span class="t " style="left:479.5px;top:173px;font-size:11px;transform:scaleX(0.8502);transform-origin:0 0;">ум</span>
<div style="left:490.500px;top:160px;width:4.500px;height:13px;overflow:hidden"><span class="t" style="left:0;top:0;font-size:11px">к</span></div>
<div style="left:490px;top:173px;width:5.500px;height:13px;overflow:hidden"><span class="t" style="left:1px;top:0;font-size:11px">а</span></div>
<div class="gh" style="left:497px;top:155px;width:21px;height:35px;"></div>
<span class="t " style="left:500px;top:160px;font-size:11px;transform:scaleX(0.9059);transform-origin:0 0;">ага</span>
<span class="t " style="left:500.5px;top:173px;font-size:11px;transform:scaleX(0.8502);transform-origin:0 0;">ум</span>
<div style="left:511px;top:173px;width:5px;height:13px;overflow:hidden"><span class="t" style="left:1px;top:0;font-size:11px">а</span></div>
<div class="gh" style="left:518px;top:155px;width:20px;height:35px;"></div>
<span class="t " style="left:523px;top:167px;font-size:11px;letter-spacing:1.550px;">Д</span>
<div style="left:520.500px;top:170px;width:1.500px;height:8px;background:#000"></div><div style="left:519.500px;top:176px;width:1.500px;height:3px;background:#000"></div>
<svg style="left:532px;top:169px" width="4" height="9"><path d="M3.500 .5q-2.800 .8 -2.800 3.900q0 3 2.800 3.900" fill="none" stroke="#000" stroke-width="1.100"/></svg>
<div class="gh" style="left:538px;top:155px;width:23px;height:35px;"></div>
<span class="t " style="left:539.5px;top:167px;font-size:11px;letter-spacing:-0.322px;">ота.</span>
<div class="gh" style="left:561px;top:155px;width:59px;height:35px;"></div>
<span class="t " style="left:574px;top:167px;font-size:11px;letter-spacing:0.044px;">Обект</span>
<div class="gh" style="left:620px;top:155px;width:62px;height:35px;"></div>
<span class="t " style="left:630px;top:160px;font-size:11px;transform:scaleX(0.9349);transform-origin:0 0;">Сума на</span>
<span class="t " style="left:623.5px;top:173px;font-size:11px;letter-spacing:0.075px;">родажбат</span>
<div style="left:620px;top:173px;width:3px;height:13px;overflow:hidden"><span class="t" style="left:-3px;top:0;font-size:11px">п</span></div>
<div style="left:674px;top:173px;width:5.500px;height:13px;overflow:hidden"><span class="t" style="left:0;top:0;font-size:11px">а</span></div>
<div class="gh" style="left:682px;top:155px;width:21px;height:35px;"></div>
<span class="t " style="left:684.5px;top:167px;font-size:11px;transform:scaleX(0.8736);transform-origin:0 0;">ели</span>
<div style="left:682px;top:167px;width:2px;height:13px;overflow:hidden"><span class="t" style="left:-4px;top:0;font-size:11px">д</span></div>
<div class="gh" style="left:703px;top:155px;width:112px;height:35px;"></div>
<span class="t " style="left:711px;top:167px;font-size:11px;letter-spacing:0.111px;">Дата на изтегляне</span>
<div class="gh" style="left:815px;top:155px;width:113px;height:35px;"></div>
<span class="t " style="left:836px;top:167px;font-size:11px;letter-spacing:-0.181px;">Вид плащане</span>
<div class="gh" style="left:928px;top:155px;width:65px;height:35px;"></div>
<span class="t " style="left:932.5px;top:167px;font-size:11px;letter-spacing:0.015px;">Е-фактура</span>
<svg style="left:64px;top:169px" width="9" height="9"><path d="M.5 .5h7l-3.500 7z" fill="#f8f7f2" stroke="#aca899"/></svg>
<svg style="left:3.500px;top:207px" width="8" height="12"><path d="M0 0l7 5.500-7 5.500z" fill="#000"/></svg>
<span class="t " style="left:14.5px;top:206.5px;font-size:11px;letter-spacing:-0.131px;">0000000195</span>
<span class="t " style="left:80px;top:206.5px;font-size:11px;letter-spacing:0.049px;">04.05.2012</span>
<span class="t " style="left:144.5px;top:206.5px;font-size:11px;letter-spacing:-0.075px;">Хотел Свежест</span>
<span class="t " style="left:308.5px;top:206.5px;font-size:11px;letter-spacing:-0.372px;">СИТ-97 ООД</span>
<span class="t " style="left:416.5px;top:206.5px;font-size:11px;letter-spacing:-0.331px;">Несебър</span>
<span class="t " style="left:477.5px;top:206.5px;font-size:11px;transform:scaleX(0.9155);transform-origin:0 0;">.17</span>
<span class="t " style="left:499px;top:206.5px;font-size:11px;letter-spacing:-0.396px;">.17</span>
<span class="t " style="left:519px;top:206.5px;color:#fff;font-size:11px;letter-spacing:-0.146px;">.83</span>
<span class="t " style="left:534.5px;top:206.5px;font-size:11px;letter-spacing:0.530px;">7.00</span>
<div style="left:534px;top:205px;width:3.500px;height:16px;background:#a8a291"></div>
<span class="t " style="left:563.5px;top:206.5px;font-size:11px;letter-spacing:-0.331px;">Несебър</span>
<span class="t " style="left:683.5px;top:206.5px;font-size:11px;letter-spacing:-0.131px;">'.00</span>
<span class="t " style="left:705.5px;top:206.5px;font-size:11px;letter-spacing:0.115px;">04.05.2012 16:13:49</span>
<span class="t " style="left:877.5px;top:206.5px;font-size:11px;letter-spacing:-0.142px;">По банка</span>
<span class="t " style="left:934.5px;top:206.5px;font-size:11px;letter-spacing:0.015px;">Е-фактура</span>
<span class="t " style="left:14.5px;top:672px;font-size:11px;letter-spacing:-0.188px;">Общо: 1</span>
<span class="t " style="left:477.5px;top:672px;font-size:11px;transform:scaleX(0.9155);transform-origin:0 0;">.17</span>
<span class="t " style="left:499px;top:672px;font-size:11px;letter-spacing:-0.396px;">.17</span>
<span class="t " style="left:519px;top:672px;font-size:11px;letter-spacing:-0.146px;">.83</span>
<span class="t " style="left:534.5px;top:672px;font-size:11px;letter-spacing:0.530px;">7.00</span>
<div style="left:534px;top:670px;width:3.500px;height:16px;background:#fffbf0"></div>
<div class="btn" style="top:155px;"></div>
<span class="t " style="left:1215.5px;top:161px;color:#000;font-size:11px;letter-spacing:-0.045px;"><u>З</u>арежда</span>
<div class="btn" style="top:183px;"></div>
<span class="t " style="left:1222.5px;top:189px;color:#000;font-size:11px;letter-spacing:0.049px;">Пе<u>ч</u>ат</span>
<div class="btn" style="top:221px;"></div>
<span class="t " style="left:1213.5px;top:227px;color:#000;font-size:11px;letter-spacing:-0.084px;">О<u>р</u>игинал</span>
<div class="btn" style="top:249px;box-shadow:inset 0 0 0 1px #5b7fb8,inset -1px -1px 0 1px #9db4d9;"></div>
<span class="t " style="left:1212.5px;top:255px;color:#000;font-size:11px;letter-spacing:0.264px;"><u>Д</u>убликат</span>
<div class="btn dis" style="top:277px;"></div>
<span class="t " style="left:1194.5px;top:283px;color:#aca899;font-size:11px;letter-spacing:-0.088px;">Печат на <u>Ф</u>П</span>
<div class="btn dis" style="top:305px;"></div>
<span class="t " style="left:1213.5px;top:311px;color:#aca899;font-size:11px;letter-spacing:0.074px;">Редакци<u>я</u></span>
<div class="btn" style="top:333px;"></div>
<span class="t " style="left:1217px;top:339px;color:#000;font-size:11px;letter-spacing:-0.162px;"><u>А</u>нулира</span>
<div class="btn" style="top:363px;"></div>
<div style="left:1190px;top:364px;width:79px;height:21px;border:1px solid #e3a84c;border-bottom-color:#e8972e;border-radius:2px;"></div><div style="left:1192px;top:366px;width:75px;height:17px;border:1px dotted #333;"></div>
<span class="t " style="left:1199.5px;top:369px;color:#000;font-size:11px;letter-spacing:-0.071px;">Експортира</span>
<div class="btn dis" style="top:391px;"></div>
<span class="t " style="left:1200.5px;top:397px;color:#aca899;font-size:11px;letter-spacing:-0.116px;">Бърз печат</span>
<div class="btn" style="top:419px;"></div>
<span class="t " style="left:1208px;top:425px;color:#000;font-size:11px;letter-spacing:0.135px;">Фактура</span>
<div class="btn" style="top:448px;"></div>
<span class="t " style="left:1204.5px;top:454px;color:#000;font-size:11px;letter-spacing:0.040px;">Тържище</span>
<div class="btn" style="top:477px;"></div>
<span class="t " style="left:1202.5px;top:483px;color:#000;font-size:11px;letter-spacing:-0.051px;">Е-фактури</span>
<div class="btn" style="top:506px;"></div>
<span class="t " style="left:1201.5px;top:512px;color:#000;font-size:11px;transform:scaleX(0.9117);transform-origin:0 0;">Само e-mail</span>
<div class="btn" style="top:565px;"></div>
<span class="t " style="left:1208px;top:571px;color:#000;font-size:11px;letter-spacing:-0.062px;">Нов ред</span>
<svg style="left:1193px;top:159px" width="17" height="17" viewBox="0 0 17 17"><path d="M2.800 8.500a5.400 5.400 0 0 1 9.400-3.600" fill="none" stroke="#3c84dc" stroke-width="3.200"/><path d="M9 8h7.500v-7z" fill="#3c84dc"/><path d="M14.200 8.500a5.400 5.400 0 0 1-9.400 3.600" fill="none" stroke="#4a90e4" stroke-width="3.200"/><path d="M8 9h-7.500v7z" fill="#4a90e4"/></svg>
<svg style="left:1193px;top:188px" width="16" height="15" viewBox="0 0 16 15"><path d="M4.500 .5h8l-1.500 5h-8z" fill="#fbfbfb" stroke="#b0b4b8"/><path d="M.5 7.500l2.500-2.500h10l2.500 2.500v5h-15z" fill="#d4d8dc" stroke="#9ea4aa"/><path d="M.5 9.500h15" stroke="#9ea4aa"/><rect x="2.500" y="11" width="11" height="3.500" fill="#f4f4f4" stroke="#a8acb0"/><rect x="11" y="8" width="3" height="4" fill="#4fb04a"/></svg>
<svg style="left:1193px;top:225px" width="17" height="15" viewBox="0 0 17 15"><rect x=".5" y="1.500" width="9" height="12" fill="#f2f2ee" stroke="#a0a49c"/><path d="M2 4.500h4M2 6.500h3M2 10.500h5" stroke="#b8bcb4"/><rect x="2" y="8" width="4" height="3" fill="#c8d0dc"/><circle cx="9.500" cy="5" r="3.500" fill="#e4eefa" stroke="#98a4b4" stroke-width="1.200"/><path d="M12 8l3.500 3.500" stroke="#c8a040" stroke-width="2.400"/></svg>
<svg style="left:1193px;top:253px" width="17" height="16" viewBox="0 0 17 16"><rect x="4.500" y=".5" width="12" height="11" fill="#fff" stroke="#6f8ec9"/><path d="M4.500 1.500h12" stroke="#4a7ad8" stroke-width="2"/><path d="M10 5.500h5M10 7.500h5M10 9.500h4" stroke="#9fb0c9"/><circle cx="5" cy="8.500" r="3.800" fill="#dfeefc" stroke="#8c96a8" stroke-width="1.400"/><path d="M7.500 11.500l3.500 3.500" stroke="#c8a040" stroke-width="2.400"/></svg>
<svg style="left:1193px;top:308px" width="17" height="17" viewBox="0 0 17 17"><path d="M1.500 2.500h3v3h-3zM1.500 7.500h3v3h-3zM1.500 12.500h3v3h-3z" fill="#f0eee2" stroke="#b8b5a4"/><path d="M5.500 4h4M5.500 9h3" stroke="#c4c1b0"/><path d="M15 1.500l-8 9-1 3 3-1 8-9z" fill="#dcd9c8" stroke="#b0ad9b"/></svg>
<svg style="left:1193px;top:337px" width="17" height="16" viewBox="0 0 17 16"><path d="M1.500 1.500l13 13M14.500 1.500l-13 13" stroke="#e05448" stroke-width="2.200" stroke-linecap="round"/></svg>
<div style="left:1031px;top:362px;width:156px;height:185px;background:#fff;border:1px solid #aca899;box-shadow:2px 2px 2px rgba(0,0,0,.35);"></div>
<div style="left:1034px;top:465px;width:151px;height:20px;background:#316ac5;"></div>
<span class="t " style="left:1056.5px;top:369px;color:#000;font-size:11px;letter-spacing:-0.053px;">За Бизнес навигатор</span>
<span class="t " style="left:1056.5px;top:389px;color:#000;font-size:11px;letter-spacing:-0.240px;">За MegaSoft</span>
<span class="t " style="left:1056.5px;top:409px;color:#000;font-size:11px;letter-spacing:-0.283px;">За ТопС</span>
<span class="t " style="left:1056.5px;top:429px;color:#000;font-size:11px;letter-spacing:-0.309px;">За Плюс Минус</span>
<span class="t " style="left:1056.5px;top:449px;color:#000;font-size:11px;letter-spacing:-0.006px;">Дневник ЗДДС</span>
<span class="t " style="left:1056.5px;top:469px;color:#fff;font-size:11px;letter-spacing:-0.004px;">Дневник ЗДДС Win</span>
<span class="t " style="left:1056.5px;top:489px;color:#000;font-size:11px;letter-spacing:-0.401px;">За ФАКТ</span>
<span class="t " style="left:1056.5px;top:509px;color:#000;font-size:11px;letter-spacing:-0.230px;">За Санта</span>
<span class="t " style="left:1056.5px;top:529px;color:#000;font-size:11px;letter-spacing:-0.048px;">Бизнес навигатор 2</span>
<svg style="left:0;top:0" width="1280" height="800"><path d="M935 507L1033 474" stroke="#000" stroke-width="4" stroke-linecap="round" fill="none"/><path d="M1023.500 466.500L1034 472.500L1035.500 487" stroke="#000" stroke-width="4" stroke-linecap="round" stroke-linejoin="round" fill="none"/></svg>
<div class="tb" style="left:0;top:686px;width:357px;height:23px;background:linear-gradient(#f9f8f3,#efede2 60%,#e6e3d4);"></div>
<div class="grip" style="left:3px;top:690px;height:15px"></div>
<span class="t " style="left:12.5px;top:692px;font-size:11px;letter-spacing:-0.209px;">Прозорци:</span>
<svg style="left:73px;top:690px" width="16" height="16"><rect x="1.500" y="1.500" width="12" height="12" fill="#e6eefb" stroke="#7f98c9"/><path d="M1.500 2.500h12" stroke="#5f86d0" stroke-width="2"/><path d="M4 12l3-5 1.500 2 3-4" stroke="#e8a838" stroke-width="1.600" fill="none"/></svg>
<span class="t " style="left:90.5px;top:692px;font-size:11px;letter-spacing:-0.229px;">Каса - Банка (BGL)</span>
<div style="left:188px;top:688px;width:167.500px;height:19px;background:#fff;border:1px solid #9db3d8;border-radius:3px;box-shadow:1px 1px 0 #d8d5c6;"></div>
<svg style="left:193px;top:691px" width="13" height="13"><rect x=".5" y=".5" width="12" height="12" fill="#fff" stroke="#4f78c4"/><rect x="0" y="0" width="13" height="3" fill="#3b6fd6"/><path d="M.5 6.500h12M.5 9.500h12M4.500 3v9.500M8.500 3v9.500" stroke="#8aaae0"/><path d="M1 3.500h3.500v9h-3.500z" fill="#c6d7f4"/></svg>
<span class="t " style="left:209.5px;top:692px;font-size:11px;letter-spacing:0.069px;">Справка издадени фактури</span>
<div class="tb" style="left:0;top:709px;width:237px;height:23px;background:linear-gradient(#f9f8f3,#efede2 60%,#e6e3d4);"></div>
<div class="grip" style="left:3px;top:713px;height:15px"></div>
<span class="t " style="left:12.5px;top:715px;font-size:11px;letter-spacing:0.143px;">Активни потребители:</span>
<svg style="left:137px;top:712px" width="12" height="16"><circle cx="6" cy="5" r="3" fill="#c9c9c9" stroke="#8a8a8a"/><path d="M1.500 14c0-6 9-6 9 0z" fill="#d0425a" stroke="#8a2d3a" stroke-width=".8"/></svg>
<span class="t " style="left:153px;top:715px;color:#0a1a6a;font-size:11px;letter-spacing:-0.041px;">Детелин Илиев</span>
<div style="left:0;top:732px;width:1280px;height:14px;background:#ece9d8;border-top:1px solid #c5c2b0;box-shadow:inset 0 1px 0 #f8f7f1;overflow:hidden;"></div>
<div style="left:789px;top:735px;width:1px;height:11px;background:#b5b2a0;box-shadow:1px 0 0 #fff"></div>
<div style="left:968px;top:735px;width:1px;height:11px;background:#b5b2a0;box-shadow:1px 0 0 #fff"></div>
<div style="left:1128px;top:735px;width:1px;height:11px;background:#b5b2a0;box-shadow:1px 0 0 #fff"></div>
<span class="t " style="left:816px;top:737px;font-size:11px;letter-spacing:-0.125px;">Детелин Илиев</span>
<span class="t " style="left:994px;top:737px;font-size:11px;letter-spacing:-0.374px;">Detelin</span>
<span class="t " style="left:1154px;top:737px;font-size:11px;letter-spacing:0.089px;">aton_unreal</span>
<svg style="left:797px;top:738px" width="10" height="8"><circle cx="5" cy="4.500" r="3.500" fill="#8a8a8a" stroke="#555"/><circle cx="4" cy="3.500" r="1.200" fill="#ddd"/></svg>
<svg style="left:974px;top:738px" width="16" height="9"><path d="M3 8.500l-1.500-3 5-4.500 7 7" fill="#fff" stroke="#222" stroke-width="1.200"/></svg>
<svg style="left:1134px;top:738px" width="16" height="9"><rect x="5.500" y="1.500" width="6" height="5" fill="#7fa8e8" stroke="#3a5fa0"/><path d="M2 8.500h13M8.500 6.500v2" stroke="#3a5fa0"/></svg>
<div style="left:0;top:745px;width:1280px;height:25px;background:linear-gradient(#6f9cf0 0,#3f78e6 5%,#2f67dc 14%,#285fd6 40%,#255ad2 75%,#2154cb 90%,#1a48b8 100%);"></div>
<span style="left:7.800px;top:749.500px;font-size:15px;line-height:16px;font-weight:bold;color:#328ae2;transform:scaleX(1.470);transform-origin:0 0;text-shadow:-1px 0 #9ad0ff,1px 0 #9ad0ff,0 -1px #9ad0ff,0 1px #9ad0ff,-.7px -.7px #8cc4fb,.7px .7px #8cc4fb,.7px -.7px #8cc4fb,-.7px .7px #8cc4fb;">StatBar</span>
<div style="left:92.5px;top:751px;width:1.500px;height:13px;background:#9cc0f6;"></div>
<div style="left:247px;top:751px;width:1.500px;height:13px;background:#9cc0f6;"></div>
<div style="left:342.5px;top:751px;width:1.500px;height:13px;background:#9cc0f6;"></div>
<div style="left:529px;top:751px;width:1.500px;height:13px;background:#9cc0f6;"></div>
<div style="left:612.5px;top:751px;width:1.500px;height:13px;background:#9cc0f6;"></div>
<div style="left:743.5px;top:751px;width:1.500px;height:13px;background:#9cc0f6;"></div>
<div style="left:848.5px;top:751px;width:1.500px;height:13px;background:#9cc0f6;"></div>
<div style="left:1019.5px;top:751px;width:1.500px;height:13px;background:#9cc0f6;"></div>
<div style="left:1138.5px;top:751px;width:1.500px;height:13px;background:#9cc0f6;"></div>
<span class="t " style="left:253.5px;top:750px;color:#dfe9fb;line-height:15px;height:15px;text-shadow:1px 1px 0 #1f4aa8;font-size:13px;transform:scaleX(0.7384);transform-origin:0 0;">RAM:</span>
<div style="left:283px;top:750px;width:56px;height:15px;background:#1e4ec6;"></div>
<span class="t " style="left:286px;top:750px;color:#e6f2ff;font-family:'Liberation Mono',monospace;line-height:15px;height:15px;font-size:13px;transform:scaleX(0.6474);transform-origin:0 0;">1273/ 1920</span>
<span class="t " style="left:348.5px;top:750px;color:#dfe9fb;line-height:15px;height:15px;text-shadow:1px 1px 0 #1f4aa8;font-size:13px;transform:scaleX(0.7727);transform-origin:0 0;">CPU:</span>
<div style="left:381px;top:750px;width:17px;height:15px;background:#1e4ec6;"></div>
<span class="t " style="left:385.5px;top:750px;color:#e6f2ff;font-family:'Liberation Mono',monospace;line-height:15px;height:15px;font-size:13px;transform:scaleX(0.6089);transform-origin:0 0;">15</span>
<span class="t " style="left:398px;top:750px;color:#dfe9fb;line-height:15px;height:15px;text-shadow:1px 1px 0 #1f4aa8;font-size:13px;transform:scaleX(0.8219);transform-origin:0 0;">%</span>
<div style="left:649px;top:750px;width:27px;height:15px;background:#1e4ec6;"></div>
<span class="t " style="left:652.5px;top:750px;color:#e6f2ff;font-family:'Liberation Mono',monospace;line-height:15px;height:15px;font-size:13px;transform:scaleX(0.6890);transform-origin:0 0;">1.3K</span>
<div style="left:699px;top:750px;width:28px;height:15px;background:#1e4ec6;"></div>
<span class="t " style="left:702.5px;top:750px;color:#e6f2ff;font-family:'Liberation Mono',monospace;line-height:15px;height:15px;font-size:13px;transform:scaleX(0.7211);transform-origin:0 0;">0.2K</span>
<span class="t " style="left:750px;top:750px;color:#dfe9fb;line-height:15px;height:15px;text-shadow:1px 1px 0 #1f4aa8;font-size:13px;transform:scaleX(0.7367);transform-origin:0 0;">Battery:</span>
<div style="left:788px;top:750px;width:22px;height:15px;background:#1e4ec6;"></div>
<span class="t " style="left:791px;top:750px;color:#e6f2ff;font-family:'Liberation Mono',monospace;line-height:15px;height:15px;font-size:13px;transform:scaleX(0.7264);transform-origin:0 0;">100</span>
<span class="t " style="left:810px;top:750px;color:#dfe9fb;line-height:15px;height:15px;text-shadow:1px 1px 0 #1f4aa8;font-size:13px;transform:scaleX(0.6921);transform-origin:0 0;">%</span>
<span class="t " style="left:855.5px;top:750px;color:#dfe9fb;line-height:15px;height:15px;text-shadow:1px 1px 0 #1f4aa8;font-size:13px;transform:scaleX(0.7238);transform-origin:0 0;">Volume:</span>
<div style="left:897px;top:750px;width:16px;height:15px;background:#1e4ec6;"></div>
<span class="t " style="left:900px;top:750px;color:#e6f2ff;font-family:'Liberation Mono',monospace;line-height:15px;height:15px;font-size:13px;transform:scaleX(0.7050);transform-origin:0 0;">52</span>
<span class="t " style="left:914.5px;top:750px;color:#dfe9fb;line-height:15px;height:15px;text-shadow:1px 1px 0 #1f4aa8;font-size:13px;transform:scaleX(0.8219);transform-origin:0 0;">%</span>
<span class="t " style="left:1027px;top:750px;color:#dfe9fb;line-height:15px;height:15px;text-shadow:1px 1px 0 #1f4aa8;font-size:13px;transform:scaleX(0.7368);transform-origin:0 0;">Uptime:</span>
<div style="left:1069px;top:750px;width:66px;height:15px;background:#1e4ec6;"></div>
<span class="t " style="left:1072.5px;top:750px;color:#e6f2ff;font-family:'Liberation Mono',monospace;line-height:15px;height:15px;font-size:13px;transform:scaleX(0.6992);transform-origin:0 0;">0: 14:20:23</span>
<svg style="left:676px;top:752px" width="10" height="11"><path d="M5 0v8M1 5l4 4.500 4-4.500" fill="none" stroke="#eaf2ff" stroke-width="2.200"/></svg>
<svg style="left:727px;top:752px" width="10" height="11"><path d="M5 11v-8M1 6l4-4.500 4 4.500" fill="none" stroke="#eaf2ff" stroke-width="2.200"/></svg>
<div style="left:413px;top:750px;width:54px;height:15px;border:1px solid #7fb0fa;border-top-color:#5f98f4;background:#1c60e4;background-image:repeating-linear-gradient(90deg,transparent 0,transparent 8px,#4586f0 8px,#4586f0 9px),repeating-linear-gradient(0deg,transparent 0,transparent 3px,#4586f0 3px,#4586f0 4px);"></div>
<div style="left:470px;top:750px;width:54px;height:15px;border:1px solid #7fb0fa;border-top-color:#5f98f4;background:#1c60e4;background-image:repeating-linear-gradient(90deg,transparent 0,transparent 8px,#4586f0 8px,#4586f0 9px),repeating-linear-gradient(0deg,transparent 0,transparent 3px,#4586f0 3px,#4586f0 4px);"></div>
<svg style="left:414px;top:751px" width="52" height="13"><path d="M0 11h8l3-1h6l3-2 4 2h5l3-1 4 1h8l4-1 3-3" fill="none" stroke="#eef5ff" stroke-width="1.200"/></svg>
<svg style="left:471px;top:751px" width="52" height="13"><path d="M0 12h52" fill="none" stroke="#e8f1ff" stroke-width="1.200"/></svg>
<div style="left:535.5px;top:749.500px;width:16px;height:16px;border-radius:8px;background:radial-gradient(circle at 45% 35%,#5cf048,#2cc81e 55%,#178a12 100%);border:1px solid #1a6a1a;color:#0a4a0a;font-size:9px;font-weight:bold;line-height:14px;text-align:center;">N</div>
<div style="left:553.5px;top:749.500px;width:16px;height:16px;border-radius:8px;background:radial-gradient(circle at 45% 35%,#5a96f6,#2a62dc 55%,#173fa6 100%);border:1px solid #8ab4f8;color:#fff;font-size:9px;font-weight:bold;line-height:14px;text-align:center;">C</div>
<div style="left:571.5px;top:749.500px;width:16px;height:16px;border-radius:8px;background:radial-gradient(circle at 45% 35%,#5a96f6,#2a62dc 55%,#173fa6 100%);border:1px solid #8ab4f8;color:#fff;font-size:9px;font-weight:bold;line-height:14px;text-align:center;">S</div>
<div style="left:590px;top:749.500px;width:16px;height:16px;border-radius:8px;background:radial-gradient(circle at 45% 35%,#5cf048,#2cc81e 55%,#178a12 100%);border:1px solid #1a6a1a;color:#0a4a0a;font-size:9px;font-weight:bold;line-height:14px;text-align:center;">I</div>
<svg style="left:100px;top:749px" width="16" height="16" viewBox="0 0 16 16"><path d="M8 15v-7" stroke="#8a5a2a" stroke-width="2.500"/><path d="M8 8c-3-4-6-3-7-1M8 8c2-5 6-4 7-2M8 8c-1-5-4-6-6-5M8 8c1-4 4-6 6-5" stroke="#3fae3a" stroke-width="2" fill="none"/><rect x="1" y="11" width="6" height="4" fill="#7a4a2a"/></svg>
<svg style="left:118px;top:749px" width="16" height="16" viewBox="0 0 16 16"><circle cx="6" cy="6" r="5" fill="#dfe6ee" stroke="#8a96a8"/><path d="M7 9l4-3 1 4h3l-4 5-4-4z" fill="#3fc03a" stroke="#1f7a1f"/></svg>
<svg style="left:136px;top:749px" width="16" height="16" viewBox="0 0 16 16"><path d="M1 7l6-4 8 3-7 5z" fill="#f3e6c8" stroke="#5a3a1a"/><path d="M8 11v4M5 15h6" stroke="#222" stroke-width="1.500"/><path d="M9 2l5-2M10 4l5-2" stroke="#222"/></svg>
<svg style="left:154px;top:749px" width="16" height="16" viewBox="0 0 16 16"><path d="M2 6l4-3 5 1 3 4-2 5-6 1-4-4z" fill="#b98a6a" stroke="#7a5a4a"/><rect x="7" y="8" width="6" height="5" fill="#a9a9b9"/></svg>
<svg style="left:172px;top:749px" width="16" height="16" viewBox="0 0 16 16"><circle cx="8" cy="8" r="7.500" fill="#2f7fe8" stroke="#eaf2ff" stroke-width="1.500"/><circle cx="8" cy="4.500" r="2" fill="#fff"/><circle cx="4.500" cy="10" r="2" fill="#fff"/><circle cx="11.500" cy="10" r="2" fill="#fff"/></svg>
<svg style="left:190px;top:749px" width="16" height="16" viewBox="0 0 16 16"><path d="M8 3v10M3 8h10" stroke="#bfe0c0" stroke-width="1"/><rect x="6" y="1" width="4" height="3" fill="#4fc04a"/><rect x="1" y="6.500" width="4" height="3" fill="#4fc04a"/><rect x="11" y="6.500" width="4" height="3" fill="#4fc04a"/><rect x="6" y="12" width="4" height="3" fill="#4fc04a"/><rect x="5.500" y="6" width="5" height="4" fill="#eef"/></svg>
<svg style="left:208px;top:749px" width="16" height="16" viewBox="0 0 16 16"><circle cx="8.500" cy="7.500" r="6.500" fill="#3f6fd8"/><circle cx="7" cy="5.500" r="3" fill="#7fa8ee"/><path d="M.8 6c.5 6 4 9.500 8 9.500c4.500 0 7-3.500 6.700-8c-1 3.500-3.500 5.500-6.500 5c-3-.5-4.500-3-3.500-5.500c-1.500.5-2 2-2 2c-.8-2 .3-4.500 2-6c-2.500.5-4 1.800-4.700 3z" fill="#f08a1c" stroke="#c8600c" stroke-width=".5"/><path d="M3 3.500c2-.5 3.500 0 4.500 1.500l-2 1.500z" fill="#f6b42a"/></svg>
<svg style="left:226px;top:749px" width="16" height="16" viewBox="0 0 16 16"><rect x="1.500" y="1.500" width="10" height="9" fill="#e05a2a" stroke="#fff"/><rect x="5.500" y="5.500" width="9" height="7" fill="#e9eef8" stroke="#667"/><rect x="7" y="13" width="6" height="2" fill="#99a"/></svg>
<svg style="left:619px;top:749px" width="16" height="17" viewBox="0 0 16 17"><rect x="5.500" y="1.500" width="9" height="8" fill="#bcd8f6" stroke="#6f8fc0"/><rect x="1.500" y="5.500" width="9" height="8" fill="#9fc6f0" stroke="#5f80b5"/><rect x="3" y="14" width="6" height="2" fill="#cfd8e8"/></svg>
<svg style="left:826px;top:749px" width="17" height="17" viewBox="0 0 17 17"><path d="M1 2l5 8 3-2z" fill="#e9eef8" stroke="#222" stroke-width=".8"/><path d="M15 1l-7 9 3 2z" fill="#3fc0d0" stroke="#222" stroke-width=".8"/><path d="M5 11l6 0 2 4-8 1z" fill="#e8c83a" stroke="#222" stroke-width=".8"/></svg>
<svg style="left:931px;top:749px" width="16" height="17" viewBox="0 0 16 17"><circle cx="6" cy="7" r="5" fill="#8f8f8f" stroke="#555"/><circle cx="6" cy="7" r="2" fill="#c9c9c9"/><path d="M10 13c2-1 3-3 3-5M12 15c2-2 3.500-4 3.500-7" stroke="#b9a0e0" fill="none" stroke-width="1.300"/></svg>
<div style="left:953px;top:750px;width:61px;height:15px;border:1px solid #8db8ff;background:#1f55cf;"></div>
<svg style="left:954px;top:751px" width="59" height="13"><path d="M0 12L58 1" stroke="#6fa0f0" stroke-width="1"/></svg>
<div style="left:981px;top:752px;width:6px;height:11px;background:#6fa0f0;border:1px solid #cfe2ff"></div>
<div style="left:0;top:770px;width:1280px;height:30px;background:linear-gradient(#1f4fc0 0,#3d80f0 7%,#2f6de6 14%,#2860db 30%,#255bd8 70%,#2155cf 88%,#1941a5 100%);"></div>
<div style="left:0;top:770px;width:97px;height:30px;border-radius:0 10px 12px 0;background:linear-gradient(#2f7f2f 0,#5cb85c 8%,#3f9f3f 22%,#3a983a 60%,#358c35 85%,#2a6f2a 100%);box-shadow:inset -3px 0 4px rgba(20,60,20,.5),2px 0 3px rgba(10,30,90,.6);"></div>
<svg style="left:10.500px;top:774px" width="22" height="22" viewBox="0 0 22 22"><path d="M3 3c3-1.500 5-1 7 0l-1.500 6c-2-1-4-1.500-7 0z" fill="#e8492a"/><path d="M11.500 3.500c2 1 4 1.500 7 0l-1.500 6c-3 1.500-5 1-7 0z" fill="#7cc043"/><path d="M1 10.500c3-1.500 5-1 7 0l-1.500 6c-2-1-4-1.500-7 0z" fill="#3a7ae8"/><path d="M9.500 11c2 1 4 1.500 7 0l-1.500 6c-3 1.500-5 1-7 0z" fill="#f6c21a"/></svg>
<span style="left:34.500px;top:774px;font-size:18px;line-height:22px;font-weight:bold;font-style:italic;color:#fff;text-shadow:1px 1px 1px #1f4f1f;letter-spacing:-.15px">start</span>
<svg style="left:108px;top:777px" width="16" height="16" viewBox="0 0 16 16"><circle cx="8" cy="8" r="6.500" fill="#eaf2ff" stroke="#3a5fb0"/><path d="M8 4v4h3" stroke="#3a5fb0" fill="none" stroke-width="1.500"/><path d="M10 2l4 1-1 4" fill="#eaf2ff" stroke="#3a5fb0"/></svg>
<svg style="left:131px;top:777px" width="16" height="16" viewBox="0 0 16 16"><path d="M1.500 1.500h13v13h-13z" fill="#1a2a7a" stroke="#0a1a5a"/><rect x="4" y="2" width="8" height="4" fill="#fff"/><rect x="2.500" y="8.500" width="11" height="6" fill="#fff"/><path d="M2.500 11.500h11" stroke="#e03a3a" stroke-width="2"/></svg>
<svg style="left:153px;top:777px" width="16" height="16" viewBox="0 0 16 16"><circle cx="8" cy="8.500" r="5.500" fill="none" stroke="#3a9ae8" stroke-width="2.500"/><path d="M3 8.500h10" stroke="#3a9ae8" stroke-width="2"/><path d="M1 12c3-7 9-10 14-9" fill="none" stroke="#f0c030" stroke-width="1.500"/></svg>
<svg style="left:176px;top:777px" width="16" height="16" viewBox="0 0 16 16"><circle cx="8" cy="8" r="8" fill="#dc8c3c"/><circle cx="6" cy="5" r="4" fill="#eca85c" opacity=".6"/><path d="M2.500 4.500c4 2 6.500 5 7.500 10.500M5.500 1.500c3 3 6 7 7 11.500M9.500 .8c2 3 4 6 4.500 10M.8 8.500c3 1 5 3 6 7" fill="none" stroke="#1c4cb8" stroke-width="1.300"/></svg>
<svg style="left:220px;top:777px" width="10" height="7"><path d="M.8 .5l2.700 2.800-2.700 2.800M5.300 .5l2.700 2.800-2.700 2.800" fill="none" stroke="#cfe2ff" stroke-width="1.400"/></svg>
<div class="tsk" style="left:237px;width:104px;"></div>
<span class="t " style="left:264.5px;top:780px;color:#fff;font-size:11px;letter-spacing:0.155px;">UnrealSoft...</span>
<svg style="left:246px;top:778px" width="16" height="16" viewBox="0 0 16 16"><circle cx="8.500" cy="7.500" r="6.500" fill="#3f6fd8"/><circle cx="7" cy="5.500" r="3" fill="#7fa8ee"/><path d="M.8 6c.5 6 4 9.500 8 9.500c4.500 0 7-3.500 6.700-8c-1 3.500-3.500 5.500-6.500 5c-3-.5-4.500-3-3.500-5.500c-1.500.5-2 2-2 2c-.8-2 .3-4.500 2-6c-2.500.5-4 1.800-4.700 3z" fill="#f08a1c" stroke="#c8600c" stroke-width=".5"/><path d="M3 3.500c2-.5 3.500 0 4.500 1.500l-2 1.500z" fill="#f6b42a"/></svg>
<div class="tsk" style="left:343px;width:104px;"></div>
<span class="t " style="left:371.5px;top:780px;color:#fff;font-size:11px;letter-spacing:-0.047px;">Skype™ - ...</span>
<svg style="left:352px;top:778px" width="16" height="16" viewBox="0 0 16 16"><rect x=".5" y=".5" width="15" height="15" rx="3" fill="#1fa8e8"/><text x="8" y="13" font-size="13" font-weight="bold" font-family="Liberation Sans" text-anchor="middle" fill="#fff">S</text></svg>
<div class="tsk" style="left:451px;width:104px;"></div>
<span class="t " style="left:480px;top:780px;color:#fff;font-size:11px;letter-spacing:-0.135px;">"ЪнриълС...</span>
<svg style="left:460px;top:778px" width="16" height="16" viewBox="0 0 16 16"><rect x="1" y="1" width="14" height="14" fill="#111"/><circle cx="8" cy="8" r="5" fill="#3fae6a"/><path d="M3 3l4 3M13 4l-3 3" stroke="#9fe0b0"/></svg>
<div class="tsk" style="left:559px;width:104px;"></div>
<span class="t " style="left:587.5px;top:780px;color:#fff;font-size:11px;letter-spacing:0.139px;">Radmin Vie...</span>
<svg style="left:568px;top:778px" width="16" height="16" viewBox="0 0 16 16"><rect x="1.500" y="1.500" width="10" height="9" fill="#e05a2a" stroke="#fff"/><rect x="5.500" y="5.500" width="9" height="7" fill="#e9eef8" stroke="#667"/><rect x="7" y="13" width="6" height="2" fill="#99a"/></svg>
<div class="tsk" style="left:667px;width:104px;"></div>
<span class="t " style="left:696.5px;top:780px;color:#fff;font-size:11px;letter-spacing:-0.017px;">Total Com...</span>
<svg style="left:676px;top:778px" width="16" height="16" viewBox="0 0 16 16"><path d="M1.500 1.500h13v13h-13z" fill="#1a2a7a" stroke="#0a1a5a"/><rect x="4" y="2" width="8" height="4" fill="#fff"/><rect x="2.500" y="8.500" width="11" height="6" fill="#fff"/><path d="M2.500 11.500h11" stroke="#e03a3a" stroke-width="2"/></svg>
<div class="tsk" style="left:775px;width:104px;"></div>
<span class="t " style="left:804px;top:780px;color:#fff;font-size:11px;transform:scaleX(0.8582);transform-origin:0 0;">CRM</span>
<svg style="left:784px;top:778px" width="16" height="16" viewBox="0 0 16 16"><circle cx="6" cy="6" r="5" fill="#dfe6ee" stroke="#8a96a8"/><path d="M7 9l4-3 1 4h3l-4 5-4-4z" fill="#3fc03a" stroke="#1f7a1f"/></svg>
<div class="tsk" style="left:883px;width:107px;background:linear-gradient(#1a45a6,#1e4fbc 20%,#2157c8);box-shadow:inset 1px 1px 1px #143a92,inset -1px -1px 0 #2f66d6;"></div>
<span class="t " style="left:912.5px;top:780px;color:#fff;font-size:11px;letter-spacing:-0.043px;">Aton</span>
<svg style="left:892px;top:778px" width="16" height="16" viewBox="0 0 16 16"><circle cx="8" cy="8" r="8" fill="#dc8c3c"/><circle cx="6" cy="5" r="4" fill="#eca85c" opacity=".6"/><path d="M2.500 4.500c4 2 6.500 5 7.500 10.500M5.500 1.500c3 3 6 7 7 11.500M9.500 .8c2 3 4 6 4.500 10M.8 8.500c3 1 5 3 6 7" fill="none" stroke="#1c4cb8" stroke-width="1.300"/></svg>
<span class="t " style="left:1000px;top:780px;color:#fff;font-size:11px;transform:scaleX(0.7865);transform-origin:0 0;">BG</span>
<div style="left:1025px;top:770px;width:255px;height:30px;background:linear-gradient(#0f6fd0 0,#1fa6f6 8%,#1496ee 20%,#0f8ce8 60%,#0c80de 88%,#0a5fb8 100%);border-left:1px solid #0a4fa8;box-shadow:inset 1px 0 0 #3fb8ff;"></div>
<svg style="left:1036px;top:777px" width="16" height="16" viewBox="0 0 16 16"><rect x="0" y="0" width="16" height="16" fill="#fff"/><text x="5" y="13" font-size="14" font-weight="bold" font-family="Liberation Sans" text-anchor="middle" fill="#1a8a2a">V</text><text x="12" y="9" font-size="8" font-weight="bold" font-family="Liberation Sans" text-anchor="middle" fill="#1a3a9a">n</text><text x="12" y="15" font-size="8" font-weight="bold" font-family="Liberation Sans" text-anchor="middle" fill="#c01a1a">c</text></svg>
<svg style="left:1054px;top:777px" width="16" height="16" viewBox="0 0 16 16"><rect x="1" y="4" width="8" height="8" fill="#bcd8f6" stroke="#5f80b5"/><rect x="2" y="13" width="7" height="2" fill="#dfe8f6"/><path d="M11 10c1-2 1-4 0-6M13 11c2-3 2-6 0-9M15 12c2-4 2-8 0-11" stroke="#3fe03a" fill="none" stroke-width="1.200"/></svg>
<svg style="left:1073px;top:777px" width="16" height="16" viewBox="0 0 16 16"><rect x="1" y="1" width="10" height="10" fill="#2a7a2a" stroke="#cfe"/><text x="6" y="10" font-size="10" font-weight="bold" font-family="Liberation Sans" text-anchor="middle" fill="#dfd">R</text><rect x="6.500" y="6.500" width="9" height="7" fill="#e9eef8" stroke="#556"/><rect x="8" y="14" width="6" height="2" fill="#889"/></svg>
<svg style="left:1091px;top:777px" width="16" height="16" viewBox="0 0 16 16"><path d="M2 4c0-2 1-3 3-3h6c2 0 3 1 3 3v5c0 2-1 3-3 3h-2l-4 3v-3c-2 0-3-1-3-3z" fill="#6fd03a" stroke="#3a8a1a"/><path d="M4.500 6.500l2.500 3 4.500-5" stroke="#fff" stroke-width="2" fill="none"/></svg>
<svg style="left:1108px;top:777px" width="16" height="16" viewBox="0 0 16 16"><circle cx="8" cy="8" r="7.300" fill="#2f7fe8" stroke="#eaf2ff" stroke-width="1.400"/><circle cx="8" cy="4.500" r="2" fill="#fff"/><circle cx="4.500" cy="10" r="2" fill="#fff"/><circle cx="11.500" cy="10" r="2" fill="#fff"/></svg>
<svg style="left:1126px;top:777px" width="16" height="16" viewBox="0 0 16 16"><path d="M8 0l3 3h-6zM8 16l3-3h-6z" fill="#1a6a1a"/><rect x="0" y="4" width="16" height="8" fill="#f0e03a" stroke="#222" stroke-width=".6"/><text x="8" y="11" font-size="7.500" font-weight="bold" font-family="Liberation Sans" text-anchor="middle" fill="#111">SOS</text></svg>
<svg style="left:1144px;top:777px" width="16" height="16" viewBox="0 0 16 16"><rect x="5" y="1" width="8" height="7" fill="#4a5a9a" stroke="#aab"/><rect x="1" y="5" width="8" height="7" fill="#3a4a8a" stroke="#aab"/><rect x="2" y="13" width="6" height="2" fill="#bbc"/><path d="M8 9l6 6M14 9l-6 6" stroke="#e01a1a" stroke-width="2"/></svg>
<svg style="left:1162px;top:777px" width="16" height="16" viewBox="0 0 16 16"><rect x="5" y="1" width="8" height="7" fill="#4a5a9a" stroke="#aab"/><rect x="1" y="5" width="8" height="7" fill="#3a4a8a" stroke="#aab"/><rect x="2" y="13" width="6" height="2" fill="#bbc"/><path d="M8 9l6 6M14 9l-6 6" stroke="#e01a1a" stroke-width="2"/></svg>
<svg style="left:1180px;top:777px" width="16" height="16" viewBox="0 0 16 16"><rect x="5" y="1" width="8" height="7" fill="#4a5a9a" stroke="#aab"/><rect x="1" y="5" width="8" height="7" fill="#3a4a8a" stroke="#aab"/><rect x="2" y="13" width="6" height="2" fill="#bbc"/><path d="M8 9l6 6M14 9l-6 6" stroke="#e01a1a" stroke-width="2"/></svg>
<svg style="left:1198px;top:777px" width="16" height="16" viewBox="0 0 16 16"><circle cx="6" cy="7" r="5" fill="#8f8f8f" stroke="#444"/><circle cx="6" cy="7" r="2" fill="#c9c9c9"/><path d="M10 13c2-1 3-3 3-5M12 15c2-2 3.500-4 3.500-7" stroke="#cfe" fill="none" stroke-width="1.300"/></svg>
<svg style="left:1216px;top:777px" width="16" height="16" viewBox="0 0 16 16"><rect x="0" y="0" width="16" height="16" rx="2" fill="#e01a1a"/><path d="M3 12c1-5 4-8 6-8 3 0 3 4 0 5l3 3" stroke="#fff" stroke-width="2" fill="none"/></svg>
<span class="t " style="left:1239px;top:780px;color:#fff;font-size:11px;letter-spacing:-0.007px;">22:28</span>

</div></body></html>
